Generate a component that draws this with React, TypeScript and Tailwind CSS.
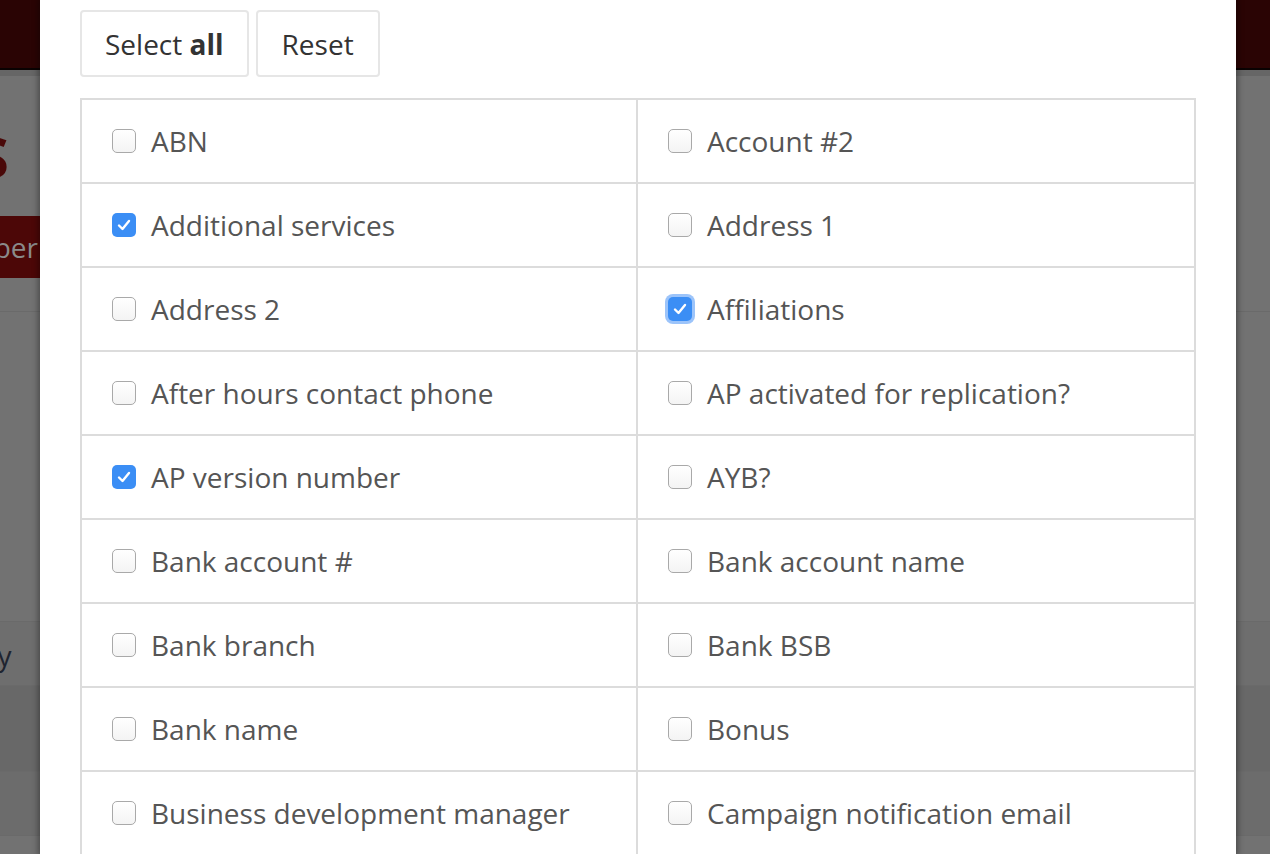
import { useState } from "react";

type Field = { label: string; checked?: boolean; focused?: boolean };

const fields: Field[] = [
    { label: "ABN" },
    { label: "Account #2" },
    { label: "Additional services", checked: true },
    { label: "Address 1" },
    { label: "Address 2" },
    { label: "Affiliations", checked: true, focused: true },
    { label: "After hours contact phone" },
    { label: "AP activated for replication?" },
    { label: "AP version number", checked: true },
    { label: "AYB?" },
    { label: "Bank account #" },
    { label: "Bank account name" },
    { label: "Bank branch" },
    { label: "Bank BSB" },
    { label: "Bank name" },
    { label: "Bonus" },
    { label: "Business development manager" },
    { label: "Campaign notification email" },
];

function Checkbox({ checked, focused }: { checked: boolean; focused?: boolean }) {
    if (checked) {
        return (
            <span
                className={`flex h-6 w-6 flex-shrink-0 items-center justify-center rounded-[5px] bg-[#3b8ef5] ${
                    focused ? "ring-[3px] ring-[#9cc4fa]" : ""
                }`}
            >
                <svg width="14" height="12" viewBox="0 0 14 12" fill="none">
                    <path d="M2 6.5 L5.5 10 L12 2" stroke="white" strokeWidth="2.4" strokeLinecap="round" strokeLinejoin="round" />
                </svg>
            </span>
        );
    }
    return (
        <span className="block h-6 w-6 flex-shrink-0 rounded-[5px] border-[1.5px] border-[#a9a9a9] bg-gradient-to-b from-white to-[#f4f4f4]" />
    );
}

export default function App() {
    const [state, setState] = useState(fields);

    function toggle(i: number) {
        setState((prev) => prev.map((f, j) => (j === i ? { ...f, checked: !f.checked } : f)));
    }

    return (
        <div
            className="relative h-[854px] w-full overflow-hidden bg-[#727272]"
            style={{ fontFamily: '"Open Sans", "Liberation Sans", sans-serif' }}
        >
            {/* Dimmed page behind the modal */}
            <div className="h-[70px] border-b-[2px] border-[#0a0202] bg-[#2a0404]" />
            <div className="h-[6px] bg-[#666]" />
            <div className="relative h-[236px] border-b border-[#6a6a6a]">
                <span className="absolute left-[-22px] top-[52px] text-[56px] leading-none font-bold text-[#4a0909]">S</span>
                <span className="absolute left-[-60px] top-[140px] flex h-[62px] w-[100px] items-center justify-end bg-[#4c0707] pr-[2px] text-[28px] text-[#8a8a8a]">
                    ber
                </span>
            </div>
            <div className="h-[310px] border-b border-[#6a6a6a]" />
            <div className="relative h-[64px] border-b border-[#6a6a6a] bg-[#6e6e6e]">
                <span className="absolute left-[-14px] top-[12px] text-[28px] text-[#1e2430]">ry</span>
            </div>
            <div className="h-[86px] border-b border-[#6a6a6a] bg-[#686868]" />
            <div className="h-[64px] border-b border-[#6a6a6a] bg-[#6c6c6c]" />

            {/* Modal */}
            <div className="absolute bottom-0 left-[40px] top-0 w-[1196px] bg-white shadow-[0_0_6px_2px_rgba(0,0,0,0.35)]">
                <div className="flex gap-[7px] pl-[40px] pt-[10px]">
                    <button
                        type="button"
                        className="h-[67px] rounded-[4px] border-2 border-[#e6e6e6] bg-white px-[23px] text-[28px] text-[#333]"
                    >
                        Select <b className="font-bold">all</b>
                    </button>
                    <button
                        type="button"
                        className="h-[67px] rounded-[4px] border-2 border-[#e6e6e6] bg-white px-[24px] text-[28px] text-[#333]"
                    >
                        Reset
                    </button>
                </div>

                <div className="ml-[40px] mt-[21px] grid w-[1116px] grid-cols-[556px_1fr] border-l-2 border-t-2 border-[#dcdcdc]">
                    {state.map((f, i) => (
                        <label
                            key={f.label}
                            onClick={() => toggle(i)}
                            className="flex h-[84px] cursor-pointer items-center gap-[15px] border-b-2 border-r-2 border-[#dcdcdc] pl-[30px] text-[28px] text-[#555]"
                        >
                            <Checkbox checked={!!f.checked} focused={f.focused} />
                            <span>{f.label}</span>
                        </label>
                    ))}
                </div>
            </div>
        </div>
    );
}
